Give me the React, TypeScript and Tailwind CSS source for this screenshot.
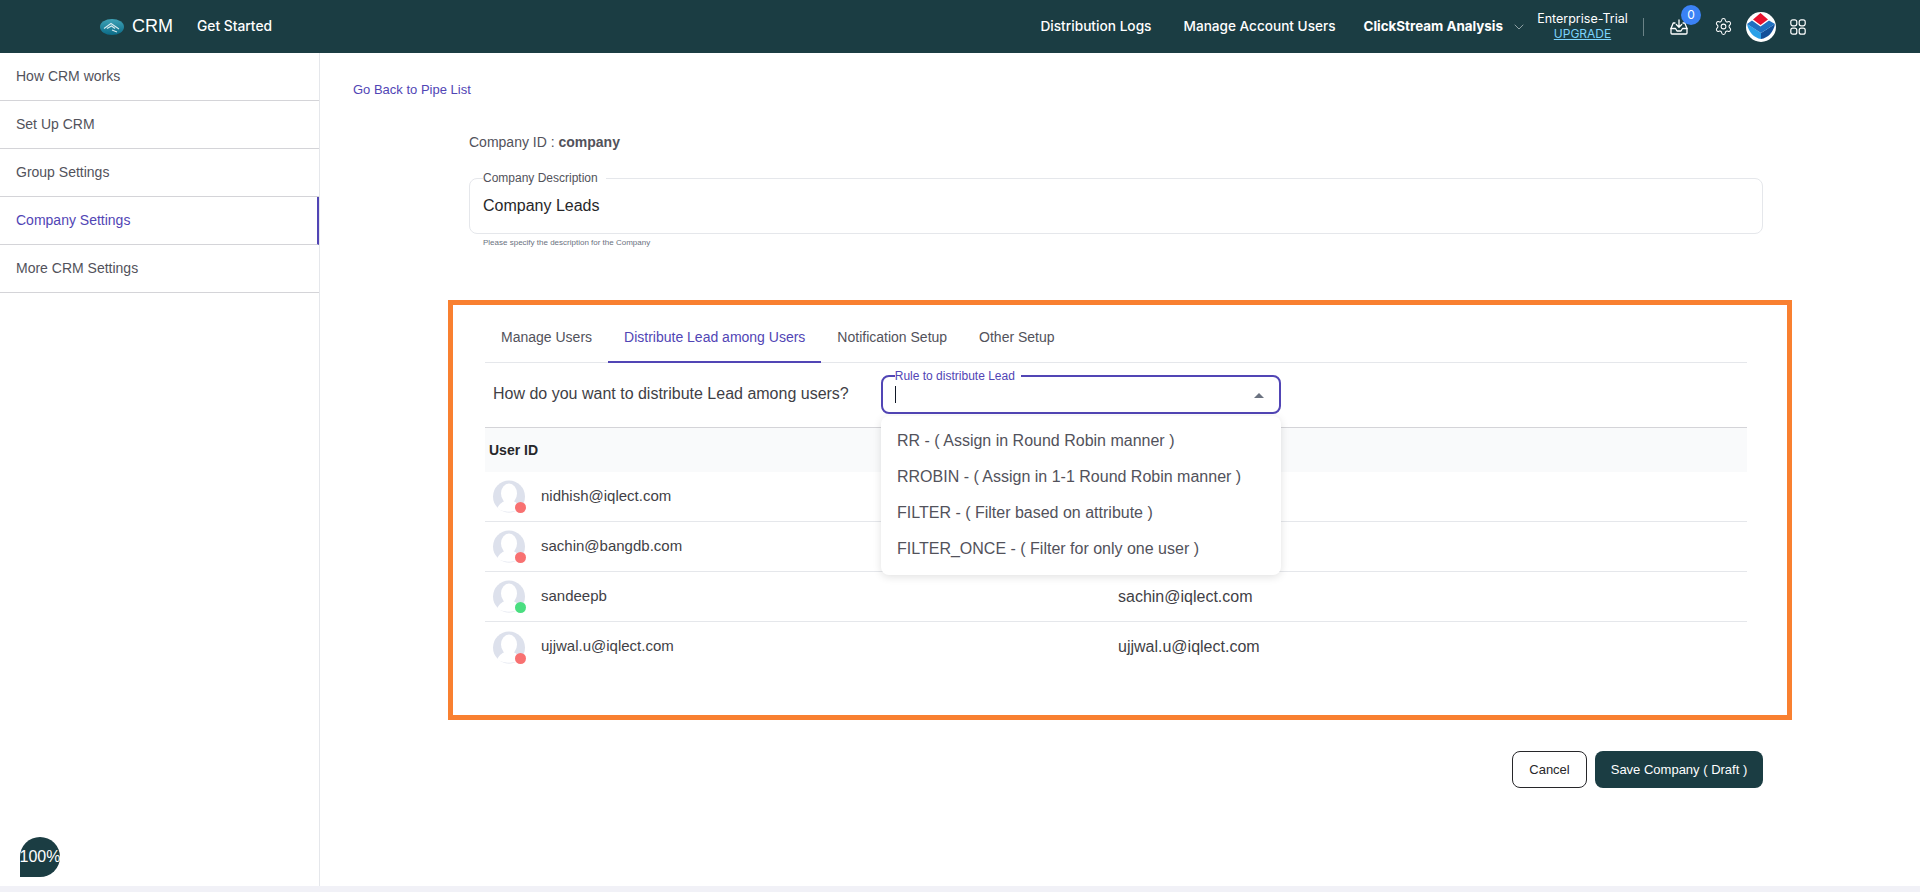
import React from "react";
import { ChevronDown, Settings } from "lucide-react";

const sideItems = ["How CRM works", "Set Up CRM", "Group Settings", "Company Settings", "More CRM Settings"];
const tabs = ["Manage Users", "Distribute Lead among Users", "Notification Setup", "Other Setup"];
const rules = [
  "RR - ( Assign in Round Robin manner )",
  "RROBIN - ( Assign in 1-1 Round Robin manner )",
  "FILTER - ( Filter based on attribute )",
  "FILTER_ONCE - ( Filter for only one user )",
];
// the open dropdown covers the second column of the first two rows
const users = [
  { id: "nidhish@iqlect.com", mail: "", online: false },
  { id: "sachin@bangdb.com", mail: "", online: false },
  { id: "sandeepb", mail: "sachin@iqlect.com", online: true },
  { id: "ujjwal.u@iqlect.com", mail: "ujjwal.u@iqlect.com", online: false },
];

const CrmLogo = () => (
  <svg width="24" height="16" viewBox="0 0 24 16" className="shrink-0">
    <defs>
      <linearGradient id="crmlogo" x1="0" y1="0" x2="0" y2="1">
        <stop offset="0" stopColor="#3fa3b8" />
        <stop offset="1" stopColor="#0b6a86" />
      </linearGradient>
    </defs>
    <ellipse cx="12" cy="8" rx="12" ry="8" fill="url(#crmlogo)" />
    <path d="M4 9.5 L11 4.5 L19 10 M7 9.5 L11.5 7 L15 9.5 M12 11 L17 13" fill="none" stroke="#d6e9ee" strokeWidth="1.1" />
  </svg>
);

const BrandLogo = () => (
  <svg width="30" height="30" viewBox="0 0 30 30" className="shrink-0">
    <circle cx="15" cy="15" r="15" fill="#ffffff" />
    <path d="M14.5 1 L22 7.5 L14.5 13 L7 7.5 Z" fill="#e8112d" />
    <path d="M1 12 L15 21 L15 27 C8 26 2.5 20 1 12 Z" fill="#2aa0e8" />
    <path d="M29 12 L15 21 L15 27 C22 26 27.5 20 29 12 Z" fill="#14509a" />
    <path d="M1 12 L6 8.5 L14.5 14.5 L23 8.5 L29 12 L15 21 Z" fill="#1f6fc0" />
  </svg>
);

const InboxIcon = () => (
  <svg width="18" height="16" viewBox="0 0 18 16" fill="none" stroke="#ffffff" strokeWidth="1.3" strokeLinecap="round" strokeLinejoin="round">
    <path d="M5 4 L3.2 4 L1 9.5 L1 14 Q1 15 2 15 L16 15 Q17 15 17 14 L17 9.5 L14.8 4 L13 4" />
    <path d="M1 9.5 L5.5 9.5 L7 12 L11 12 L12.5 9.5 L17 9.5" />
    <path d="M9 1 L9 8 M6.3 5.5 L9 8.2 L11.7 5.5" />
  </svg>
);

const GridIcon = () => (
  <svg width="16" height="16" viewBox="0 0 16 16" fill="none" stroke="#ffffff" strokeWidth="1.2">
    <rect x="0.8" y="0.8" width="6" height="6" rx="2" />
    <rect x="9.2" y="0.8" width="6" height="6" rx="2" />
    <rect x="0.8" y="9.2" width="6" height="6" rx="2" />
    <rect x="9.2" y="9.2" width="6" height="6" rx="2" />
  </svg>
);

const Avatar = ({ online }: { online: boolean }) => (
  <div className="relative w-[33px] h-[33px] shrink-0">
    <svg width="33" height="33" viewBox="0 0 33 33">
      <circle cx="16" cy="16.5" r="16" fill="#dde1ec" />
      <ellipse cx="16" cy="13.5" rx="8" ry="10" fill="#ffffff" />
      <path d="M4.5 28 C6.5 23 10.5 22 12.5 20 L19.5 20 C21.5 22 25.5 23 27.5 28 C23.5 33 8.5 33 4.5 28 Z" fill="#ffffff" />
    </svg>
    <span className={`absolute right-0 bottom-0 w-[11px] h-[11px] rounded-full ${online ? "bg-[#4ade80]" : "bg-[#f87171]"}`} />
  </div>
);

export default function App() {
  return (
    <div className="h-screen flex flex-col bg-white overflow-hidden font-['Liberation_Sans',Arial,sans-serif]">
      {/* Header */}
      <header className="h-[53px] shrink-0 bg-[#1b3d43] flex items-center justify-between pl-[100px] pr-[114px] text-white">
        <div className="flex items-center">
          <CrmLogo />
          <span className="ml-2 text-[18px]">CRM</span>
          <span className="ml-[24px] text-[13.8px] font-medium font-['Inter',sans-serif]">Get Started</span>
        </div>
        <div className="flex items-center font-['Inter',sans-serif] whitespace-nowrap">
          <span className="text-[13.7px] font-medium">Distribution Logs</span>
          <span className="ml-[32px] text-[13.6px] font-medium">Manage Account Users</span>
          <span className="ml-[28px] text-[13.4px] font-bold">ClickStream Analysis</span>
          <ChevronDown size={16} strokeWidth={1} className="ml-[8px] text-[#c9d3d5]" />
          <div className="ml-[10px] flex flex-col items-center leading-[15px] w-[91px]">
            <span className="text-[12.5px]">Enterprise-Trial</span>
            <span className="text-xs underline text-[#7dd3fc]">UPGRADE</span>
          </div>
          <div className="ml-[15px] w-px h-[18px] bg-[#6b8387]" />
          <div className="relative ml-[26px]">
            <InboxIcon />
            <span className="absolute left-[11px] top-[-14px] w-5 h-5 rounded-full bg-[#3b82f6] text-xs flex items-center justify-center">0</span>
          </div>
          <Settings size={19} strokeWidth={1.3} className="ml-[26px]" />
          <div className="ml-[13px]"><BrandLogo /></div>
          <div className="ml-[14px]"><GridIcon /></div>
        </div>
      </header>

      <div className="flex-1 flex min-h-0">
        {/* Sidebar */}
        <aside className="relative w-[320px] shrink-0 border-r border-[#e5e7eb]">
          {sideItems.map((item) => {
            const active = item === "Company Settings";
            return (
              <div
                key={item}
                className={`h-[48px] flex items-center pl-4 pb-[2px] text-sm border-b border-[#d4d4d8] ${active ? "text-[#5145b5] border-r-2 border-r-[#5145b5]" : "text-[#52525b]"}`}
              >
                {item}
              </div>
            );
          })}
          <div className="absolute left-5 bottom-[9px] w-10 h-10 rounded-full rounded-bl-none bg-[#1b3d43] text-white flex items-center justify-center whitespace-nowrap">
            100%
          </div>
        </aside>

        {/* Main */}
        <main className="flex-1 min-w-0">
          <div className="ml-[33px] mt-[29px] text-[13px] leading-4 text-[#5145b5]">Go Back to Pipe List</div>

          <div className="ml-[149px] mr-[157px] mt-[36px]">
            <div className="text-sm leading-4 text-[#52525b]">
              Company ID : <span className="font-bold">company</span>
            </div>
            <fieldset className="mt-[21px] h-[63px] border border-[#e5e7eb] rounded-lg px-[13px]">
              <legend className="px-0 pr-2 text-xs leading-[14px] text-[#52525b]">Company Description</legend>
              <div className="text-base leading-5 mt-[11px] text-[#27272a]">Company Leads</div>
            </fieldset>
            <div className="ml-[14px] mt-[4px] text-[8px] leading-[10px] text-[#6b7280]">Please specify the description for the Company</div>
          </div>

          {/* Highlighted block */}
          <section className="ml-[128px] mr-[128px] mt-[52px] h-[420px] border-[5px] border-[#f98030] pl-[32px] pr-[40px]">
            <div className="flex h-[58px] border-b border-[#e5e7eb]">
              {tabs.map((tab) => {
                const active = tab === "Distribute Lead among Users";
                return (
                  <div
                    key={tab}
                    className={`h-[58px] px-4 pt-[24px] text-sm leading-4 ${active ? "text-[#5145b5] border-b-2 border-[#5145b5]" : "text-[#52525b]"}`}
                  >
                    {tab}
                  </div>
                );
              })}
            </div>

            <div className="relative flex items-start h-[64px] pl-2">
              <span className="mt-[19px] text-base leading-6 text-[#3f3f46]">How do you want to distribute Lead among users?</span>
              <fieldset className="ml-[32px] mt-[6px] w-[400px] h-[45px] border-2 border-[#5145b5] rounded-lg pl-[12px] relative">
                <legend className="pr-[6px] pl-0 text-xs leading-[14px] text-[#5145b5]">Rule to distribute Lead</legend>
                <div className="w-px h-[17px] bg-[#111827] mt-[3px]" />
                <span className="absolute right-[15px] top-[10px] w-0 h-0 border-x-[5px] border-x-transparent border-b-[5px] border-b-[#6b7280]" />
              </fieldset>
              <div className="absolute left-[396px] top-[53px] z-10 w-[400px] h-[159px] bg-white rounded-lg shadow-[0_2px_8px_rgba(0,0,0,0.12)] pt-[7px]">
                {rules.map((rule) => (
                  <div key={rule} className="h-[36px] flex items-center pl-4 text-base text-[#52525b] whitespace-nowrap">
                    {rule}
                  </div>
                ))}
              </div>
            </div>

            <div className="border-t border-[#d4d4d8]">
              <div className="h-[44px] bg-[#f9fafb] flex items-center pl-1 text-sm font-bold text-[#27272a]">User ID</div>
              {users.map((u, i) => (
                <div key={u.id} className={`h-[50px] flex items-center pl-2 text-[#3f3f46] ${i < 3 ? "border-b border-[#e5e7eb]" : ""}`}>
                  <Avatar online={u.online} />
                  <span className="ml-[15px] w-[577px] pb-[1px] text-[15px]">{u.id}</span>
                  <span className="text-base">{u.mail}</span>
                </div>
              ))}
            </div>
          </section>

          <div className="mr-[157px] mt-[31px] flex justify-end gap-2">
            <button className="w-[75px] h-[37px] border border-[#27272a] rounded-lg text-[13px] text-[#27272a]">Cancel</button>
            <button className="w-[168px] h-[37px] bg-[#1b3d43] rounded-lg text-[13px] font-medium text-white">Save Company ( Draft )</button>
          </div>
        </main>
      </div>

      <div className="h-[6px] shrink-0 bg-[#f1f1f7]" />
    </div>
  );
}
